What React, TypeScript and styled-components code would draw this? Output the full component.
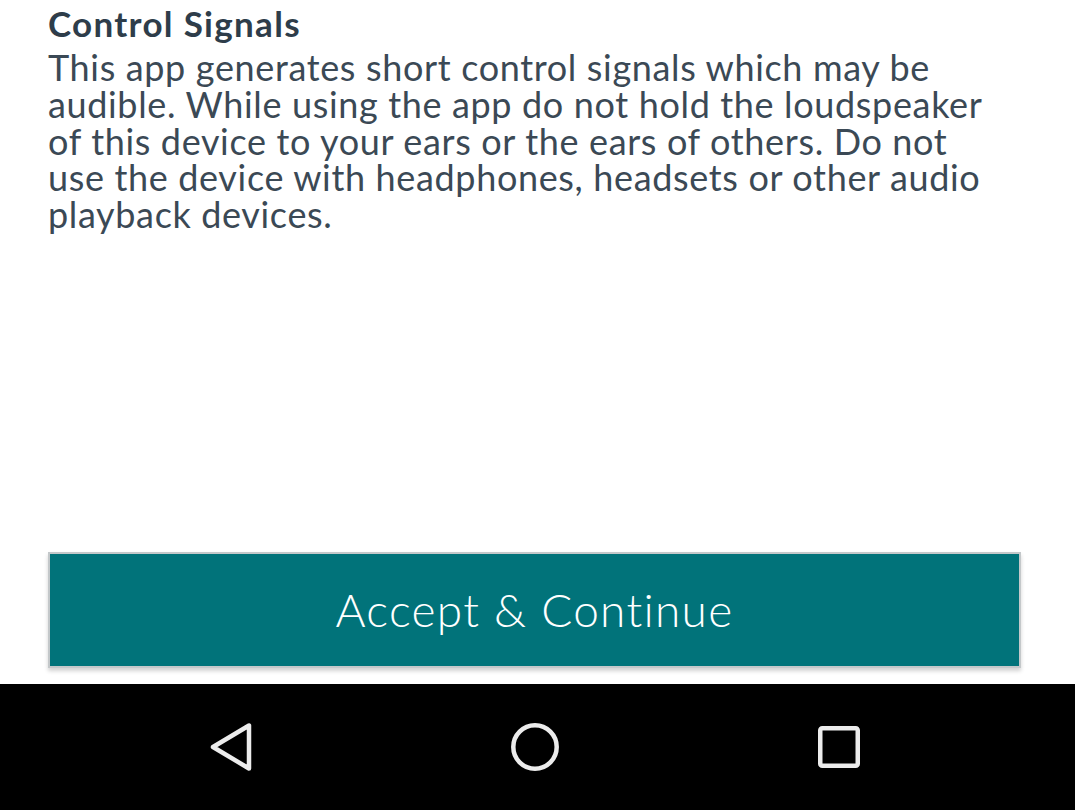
import React from "react";
import styled, { createGlobalStyle } from "styled-components";

const Global = createGlobalStyle`
  html, body { margin: 0; padding: 0; background: #ffffff; }
  body { font-family: Lato, "Open Sans", sans-serif; }
`;

const Screen = styled.div`
  width: 1075px;
  height: 810px;
  display: flex;
  flex-direction: column;
  background: #ffffff;
  overflow: hidden;
`;

const Content = styled.main`
  flex: 1;
  display: flex;
  flex-direction: column;
  padding: 2px 54px 16px 48px;
`;

const Heading = styled.h1`
  margin: 0;
  font-family: Lato, sans-serif;
  font-weight: 700;
  font-size: 35px;
  letter-spacing: 1.3px;
  line-height: 42px;
  color: #2e3d4a;
`;

const Body = styled.p`
  margin: 5px 0 0;
  padding-right: 21px;
  font-family: Lato, sans-serif;
  font-weight: 400;
  font-size: 36px;
  letter-spacing: 0.65px;
  line-height: 36.8px;
  color: #3b4955;
`;

const Spacer = styled.div`
  flex: 1;
`;

const AcceptButton = styled.button`
  height: 116px;
  width: 100%;
  box-sizing: border-box;
  background: #01737a;
  border: 2px solid #c4c8ca;
  box-shadow: 0 3px 4px rgba(0, 0, 0, 0.18);
  color: #ffffff;
  font-family: Lato, sans-serif;
  font-weight: 300;
  font-size: 46px;
  letter-spacing: 1.3px;
  padding-top: 0;
  padding-bottom: 2px;
  cursor: pointer;
`;

const NavBar = styled.nav`
  height: 126px;
  background: #000000;
  display: flex;
  align-items: center;
  justify-content: center;
  gap: 248px;
  padding-right: 5px;
`;

const NavIcon = styled.svg`
  width: 56px;
  height: 56px;
  display: block;
  flex: none;
`;

export default function App() {
  return (
    <>
      <Global />
      <Screen>
        <Content>
          <Heading>Control Signals</Heading>
          <Body>
            This app generates short control signals which may be audible. While using the app do not hold the loudspeaker of this device to your ears or the ears of others. Do not use the device with headphones, headsets or other audio playback devices.
          </Body>
          <Spacer />
          <AcceptButton>Accept &amp; Continue</AcceptButton>
        </Content>
        <NavBar>
          <NavIcon viewBox="0 0 56 56">
            <path d="M46 6.5 L46 49.5 L10 28 Z" fill="none" stroke="#ececec" strokeWidth="4.5" strokeLinejoin="round" />
          </NavIcon>
          <NavIcon viewBox="0 0 56 56">
            <circle cx="28" cy="28" r="21.7" fill="none" stroke="#ececec" strokeWidth="4.5" />
          </NavIcon>
          <NavIcon viewBox="0 0 56 56">
            <rect x="9.25" y="9.25" width="37.5" height="37.5" rx="2" fill="none" stroke="#ececec" strokeWidth="4.5" />
          </NavIcon>
        </NavBar>
      </Screen>
    </>
  );
}
